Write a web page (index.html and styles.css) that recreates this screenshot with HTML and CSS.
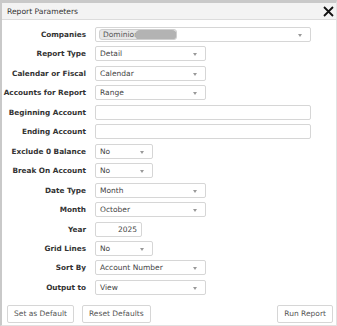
FILE: index.html
```html
<!DOCTYPE html>
<html>
<head>
<meta charset="utf-8">
<link rel="stylesheet" href="styles.css">
</head>
<body>
<div class="dialog">
  <div class="titlebar">
    <span class="title">Report Parameters</span>
    <svg class="close" width="11" height="11" viewBox="0 0 11 11"><path d="M1 1L10 10M10 1L1 10" stroke="#111" stroke-width="1.8" fill="none"/></svg>
  </div>
  <div class="form">
    <label class="lbl">Companies</label>
    <div class="ctl sel wide"><span class="chip">Dominion<span class="redact"></span></span><i class="arrow"></i></div>

    <label class="lbl">Report Type</label>
    <div class="ctl sel mid">Detail<i class="arrow"></i></div>

    <label class="lbl">Calendar or Fiscal</label>
    <div class="ctl sel mid">Calendar<i class="arrow"></i></div>

    <label class="lbl">Accounts for Report</label>
    <div class="ctl sel mid">Range<i class="arrow"></i></div>

    <label class="lbl">Beginning Account</label>
    <div class="ctl wide"></div>

    <label class="lbl">Ending Account</label>
    <div class="ctl wide"></div>

    <label class="lbl">Exclude 0 Balance</label>
    <div class="ctl sel small">No<i class="arrow"></i></div>

    <label class="lbl">Break On Account</label>
    <div class="ctl sel small">No<i class="arrow"></i></div>

    <label class="lbl">Date Type</label>
    <div class="ctl sel mid">Month<i class="arrow"></i></div>

    <label class="lbl">Month</label>
    <div class="ctl sel mid">October<i class="arrow"></i></div>

    <label class="lbl">Year</label>
    <div class="ctl year">2025</div>

    <label class="lbl">Grid Lines</label>
    <div class="ctl sel small">No<i class="arrow"></i></div>

    <label class="lbl">Sort By</label>
    <div class="ctl sel mid">Account Number<i class="arrow"></i></div>

    <label class="lbl">Output to</label>
    <div class="ctl sel mid">View<i class="arrow"></i></div>
  </div>
  <div class="footer">
    <button class="btn">Set as Default</button>
    <button class="btn">Reset Defaults</button>
    <span class="spacer"></span>
    <button class="btn">Run Report</button>
  </div>
</div>
</body>
</html>
```

FILE: styles.css
```css
* { box-sizing: border-box; }
html, body { margin: 0; padding: 0; background: #fff; }
body { font-family: "DejaVu Sans", Verdana, sans-serif; color: #333; }

.dialog {
  width: 337px;
  height: 326px;
  border-top: 3px solid #c9c9c9;
  border-left: 2px solid #c9c9c9;
  border-right: 1px solid #e2e2e2;
  border-bottom: 1px solid #e2e2e2;
  display: flex;
  flex-direction: column;
}

.titlebar {
  height: 17px;
  background: #f3f3f3;
  border-bottom: 1px solid #dcdcdc;
  display: flex;
  align-items: center;
  justify-content: space-between;
  padding: 0 2px 0 5px;
}
.title { font-size: 7.6px; color: #333; }
.close { display: block; }

.form {
  display: grid;
  grid-template-columns: 84px 1fr;
  grid-auto-rows: 15px;
  column-gap: 9px;
  row-gap: 4.46px;
  padding-top: 7px;
  align-items: center;
}
.lbl {
  text-align: right;
  font-weight: bold;
  font-size: 7.3px;
  color: #333;
  white-space: nowrap;
}
.ctl {
  position: relative;
  height: 15px;
  border: 1px solid #d6d6d6;
  border-radius: 2px;
  background: #fff;
  font-size: 7.5px;
  color: #444;
  display: flex;
  align-items: center;
  padding-left: 4px;
  white-space: nowrap;
}
.wide { width: 216px; }
.mid { width: 111px; }
.small { width: 58px; }
.year { width: 47px; justify-content: flex-end; padding-right: 4px; }

.arrow {
  position: absolute;
  right: 8px;
  top: 6px;
  width: 0; height: 0;
  border-left: 2.5px solid transparent;
  border-right: 2.5px solid transparent;
  border-top: 3px solid #999;
}

.chip {
  position: relative;
  display: flex;
  align-items: center;
  height: 11px;
  width: 78px;
  background: #e6e6e6;
  border: 1px solid #cfcfcf;
  border-radius: 3px;
  padding-left: 3px;
  margin-left: -1px;
  font-size: 7.5px;
  color: #555;
  overflow: hidden;
}
.redact {
  position: absolute;
  left: 35px;
  top: 0;
  width: 42px;
  height: 10px;
  border-radius: 5px;
  background: #b3b3b3;
  filter: blur(0.6px);
}

.footer {
  display: flex;
  gap: 8px;
  padding: 0 3px 0 5px;
  margin-top: 10px;
}
.spacer { flex: 1; }
.btn {
  height: 18px;
  background: #fff;
  border: 1px solid #d6d6d6;
  border-radius: 2px;
  font-family: "DejaVu Sans", Verdana, sans-serif;
  font-size: 7.5px;
  color: #555;
  padding: 0 6px;
}
```
